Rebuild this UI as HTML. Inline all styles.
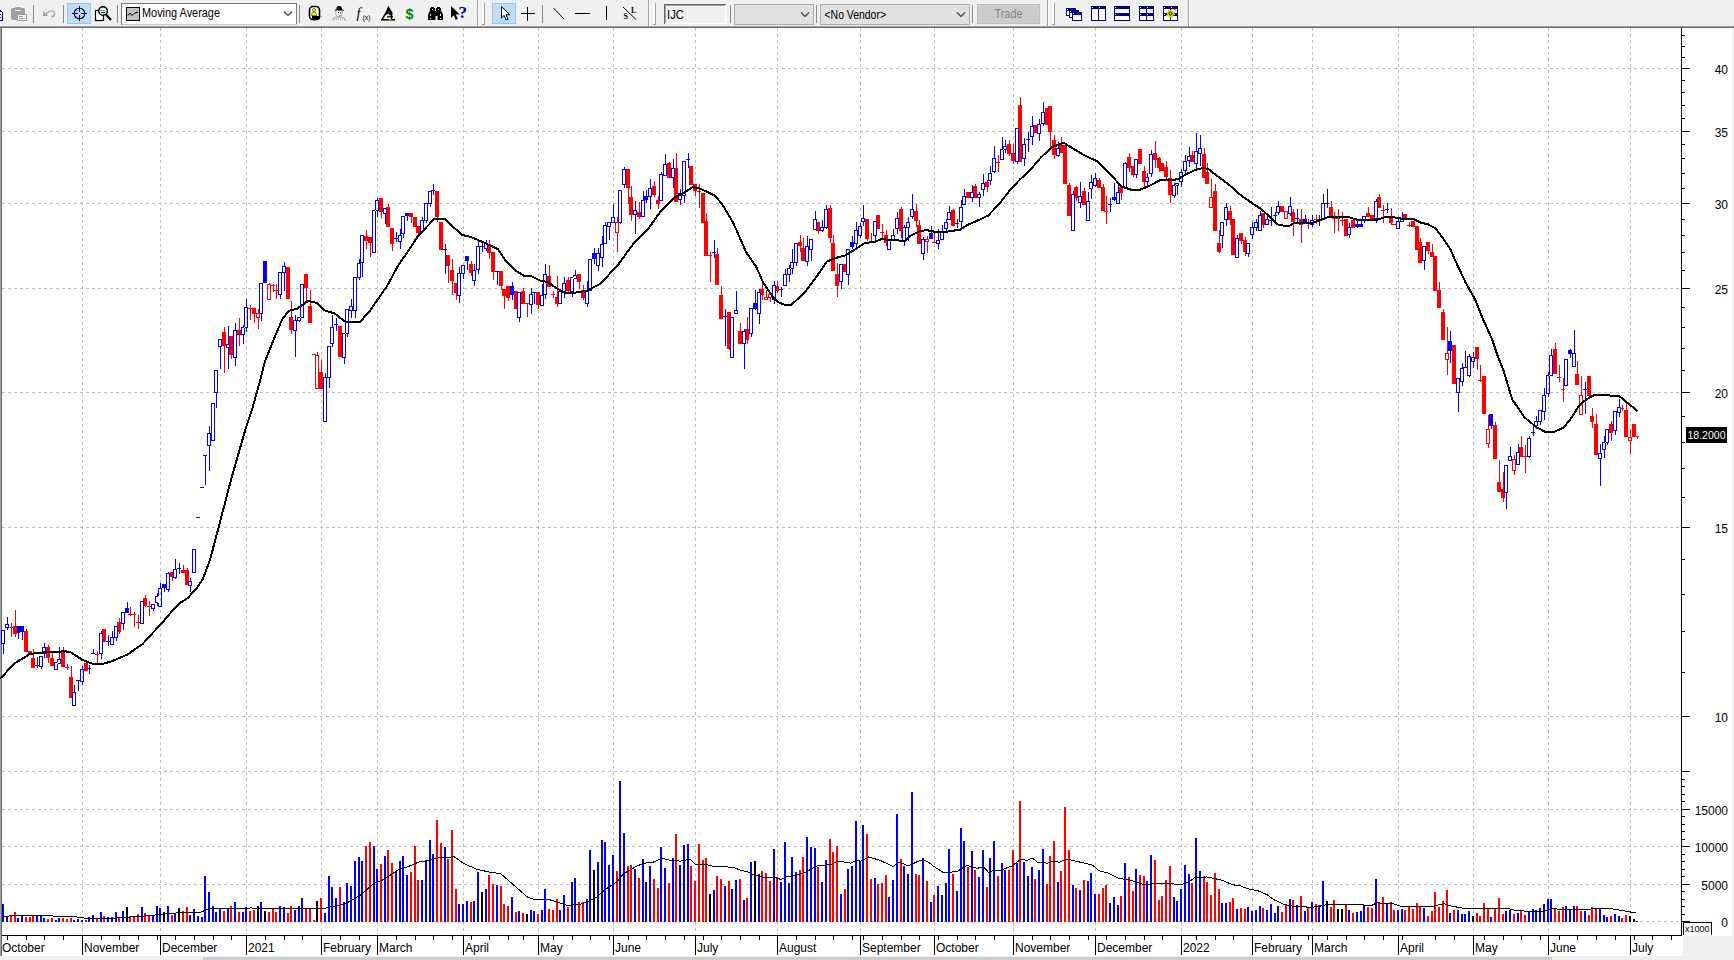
<!DOCTYPE html>
<html><head><meta charset="utf-8"><title>IJC</title>
<style>
html,body{margin:0;padding:0;background:#fff;}
body{width:1734px;height:960px;overflow:hidden;position:relative;font-family:"Liberation Sans",Arial,sans-serif;}
#chart{position:absolute;left:0;top:0;}
</style></head><body>
<svg id="tb" width="1734" height="28" viewBox="0 0 1734 28" style="position:absolute;left:0;top:0;z-index:2" font-family="'Liberation Sans', Arial, sans-serif">
<rect x="0" y="0" width="1734" height="26" fill="#f0f0f0"/>
<rect x="0" y="26" width="1734" height="1" fill="#a0a0a0"/>
<rect x="0" y="27" width="1734" height="1" fill="#696969"/>
<g shape-rendering="crispEdges">
<!-- separators -->
<g fill="#8a8a8a">
<rect x="33" y="5" width="1" height="18"/><rect x="63" y="5" width="1" height="18"/><rect x="117" y="5" width="1" height="18"/>
<rect x="299" y="5" width="1" height="18"/><rect x="542" y="5" width="1" height="18"/><rect x="730" y="5" width="1" height="18"/>
<rect x="816" y="5" width="1" height="18"/><rect x="972" y="5" width="1" height="18"/>
</g>
<!-- band dividers -->
<g>
<rect x="477" y="0" width="1" height="26" fill="#a0a0a0"/><rect x="478" y="0" width="1" height="26" fill="#fff"/>
<rect x="648" y="0" width="1" height="26" fill="#a0a0a0"/><rect x="649" y="0" width="1" height="26" fill="#fff"/>
<rect x="1047" y="0" width="1" height="26" fill="#a0a0a0"/><rect x="1048" y="0" width="1" height="26" fill="#fff"/>
<rect x="1188" y="0" width="1" height="26" fill="#a0a0a0"/><rect x="1189" y="0" width="1" height="26" fill="#fff"/>
</g>
<!-- grips -->
<g>
<rect x="482" y="3" width="2" height="21" fill="#fff"/><rect x="484" y="3" width="1" height="22" fill="#a0a0a0"/><rect x="482" y="24" width="3" height="1" fill="#a0a0a0"/>
<rect x="653" y="3" width="2" height="21" fill="#fff"/><rect x="655" y="3" width="1" height="22" fill="#a0a0a0"/><rect x="653" y="24" width="3" height="1" fill="#a0a0a0"/>
<rect x="1052" y="3" width="2" height="21" fill="#fff"/><rect x="1054" y="3" width="1" height="22" fill="#a0a0a0"/><rect x="1052" y="24" width="3" height="1" fill="#a0a0a0"/>
</g>
<!-- highlighted buttons -->
<rect x="67.5" y="3.5" width="23" height="20" fill="#c0dcf3" stroke="#90c8f6"/>
<rect x="492.5" y="3.5" width="23" height="20" fill="#c0dcf3" stroke="#90c8f6"/>
<!-- combos / fields -->
<rect x="121.5" y="3.5" width="175" height="21" fill="#fff" stroke="#7a7a7a"/>
<rect x="122" y="24" width="175" height="1" fill="#c8c8c8"/>
<rect x="664.5" y="4.5" width="61" height="19" fill="#f0f0f0" stroke="#fff"/>
<rect x="664" y="4" width="62" height="1" fill="#696969"/><rect x="664" y="4" width="1" height="20" fill="#696969"/>
<rect x="665" y="5" width="60" height="1" fill="#a0a0a0"/><rect x="665" y="5" width="1" height="18" fill="#a0a0a0"/>
<rect x="734.5" y="4.5" width="79" height="20" fill="#e1e1e1" stroke="#adadad"/>
<rect x="820.5" y="4.5" width="149" height="20" fill="#e1e1e1" stroke="#adadad"/>
<rect x="977.5" y="4.5" width="62" height="19" fill="#cccccc" stroke="#bfbfbf"/>
</g>
<!-- text -->
<g font-size="12" fill="#000">
<text x="142" y="17.3" textLength="78" lengthAdjust="spacingAndGlyphs">Moving Average</text>
<text x="667" y="18.5" textLength="17" lengthAdjust="spacingAndGlyphs">IJC</text>
<text x="824.5" y="18.5" textLength="61.5" lengthAdjust="spacingAndGlyphs">&lt;No Vendor&gt;</text>
<text x="994.5" y="18" fill="#838383" textLength="28" lengthAdjust="spacingAndGlyphs">Trade</text>
</g>
<!-- chevrons -->
<g fill="none" stroke="#404040" stroke-width="1.2">
<polyline points="284,11.5 288,15.5 292,11.5"/>
<polyline points="801,12.5 805,16.5 809,12.5"/>
<polyline points="957,12.5 961,16.5 965,12.5"/>
</g>
<!--ICONS-->
<!-- copy fragment -->
<g shape-rendering="crispEdges"><rect x="0" y="11" width="2" height="9" fill="#fff"/><path fill="#000080" d="M0 10h1v1h1v1h1v9h-3v-1h2v-8h-2z M0 14h1v1h-1z M0 17h1v1h-1z"/></g>
<!-- paste (disabled gray) -->
<g fill="#a0a0a0">
<rect x="11" y="8" width="14" height="12" rx="2"/><rect x="15" y="7" width="6" height="2" rx="1"/>
<rect x="15" y="10" width="6" height="1" fill="#f0f0f0"/>
<rect x="17.5" y="14.5" width="9" height="6" fill="#f0f0f0" stroke="#a0a0a0"/>
<rect x="19" y="16" width="4" height="1"/><rect x="19" y="18" width="6" height="1"/>
</g>
<!-- undo -->
<g fill="none" stroke="#a0a0a0" stroke-width="1.3"><path d="M45.5 14.5 L49 11.5 Q54.5 9.5 54.5 13.5 Q54.5 16.5 51.5 16.8"/></g>
<path fill="#a0a0a0" d="M43 11v5h5z"/>
<!-- crosshair -->
<circle cx="79.5" cy="13.5" r="5.3" fill="none" stroke="#000" stroke-width="1.1"/>
<g shape-rendering="crispEdges" fill="#0000a0"><rect x="72" y="13" width="6" height="1"/><rect x="81" y="13" width="6" height="1"/><rect x="79" y="6" width="1" height="6"/><rect x="79" y="15" width="1" height="6"/></g>
<!-- zoom magnifier -->
<g><rect x="95.5" y="10.5" width="8" height="10" fill="#fff" stroke="#000" stroke-width="1.2"/>
<circle cx="103" cy="11" r="4.3" fill="#f0f0f0" stroke="#000" stroke-width="1.4"/>
<rect x="100" y="10" width="5" height="1" fill="#00c8d0"/><rect x="101" y="12" width="4" height="1" fill="#000"/>
<line x1="106" y1="14.5" x2="111" y2="20" stroke="#000" stroke-width="2.2"/></g>
<!-- combo inner icon -->
<g shape-rendering="crispEdges"><rect x="126.500" y="7.500" width="13" height="13" fill="#c0c0c0" stroke="#000"/></g>
<polyline points="128,15.5 130,13 132,15.5 134,13.5 138,12" fill="none" stroke="#000" stroke-width="1"/>
<!-- lock/person -->
<g><rect x="309.500" y="6.500" width="10" height="13" rx="3.500" fill="#fff" stroke="#000" stroke-width="1.6"/>
<circle cx="314" cy="10" r="1.6" fill="#ffff00" stroke="#000" stroke-width="0.5"/>
<path d="M311.500 15.500 q0-3.500 2.500-3.500 q2.500 0 2.500 3.500z" fill="#ffff00" stroke="#000" stroke-width="0.5"/>
<path d="M312 16 h8 v3 q-3 2 -8 1z" fill="#000"/><path d="M320 15l2 1.500-2 1.500z" fill="#a0a0a0"/></g>
<!-- detective -->
<g><path d="M334 10.500 h10.500 l-1.500-1 h-1 q0-3.500-2.800-3.500 q-2.800 0-2.800 3.500 h-1z" fill="#000"/>
<circle cx="338.500" cy="8.300" r="0.800" fill="#2040ff"/>
<rect x="336" y="11" width="6" height="5" fill="#fff"/><path d="M336 11v4l2 2h2l2-2v-4" fill="none" stroke="#808080" stroke-width="0.700"/>
<rect x="338" y="12" width="1" height="1" fill="#000"/><rect x="340" y="12.500" width="1" height="1" fill="#000"/><path d="M339 14.500l1.500 1.500" stroke="#000" stroke-width="0.800"/>
<path d="M332.500 20.500 q0-3 3.500-3.500 h5.500 q4 0.500 4 3.500" fill="none" stroke="#a0a0a0" stroke-width="1"/>
<g stroke="#b0b0b0" stroke-width="0.800"><path d="M334.500 20.500v-2 M336.500 20.500v-2.500 M338.500 20.500v-2.500 M340.500 20.500v-2.500 M342.500 20.500v-2.500 M344.500 20.500v-2"/></g></g>
<!-- f(x) -->
<text x="356.500" y="17.500" font-family="'Liberation Serif', serif" font-style="italic" font-size="14.500" fill="#000">f</text>
<text x="362.500" y="19.500" font-size="8" fill="#000" textLength="8" lengthAdjust="spacingAndGlyphs">(x)</text>
<!-- microscope -->
<g fill="#000"><rect x="381" y="19" width="14" height="1.600"/><path d="M388.200 5.800 L392.600 12.800 L392.400 15.200 L389.200 15.200 L388.600 13.600 L386.600 14.800 L385.200 13.200z"/><path d="M386.800 13.200 L382.800 19.400 L381.200 19.400 L385.400 12.600z"/><rect x="387" y="16.200" width="6" height="1.200"/><rect x="390.800" y="15" width="1.400" height="4"/><rect x="388.500" y="19.200" width="3" height="1" fill="#ffe000"/></g>
<!-- dollar -->
<text x="405.500" y="19" font-size="14.500" font-weight="bold" fill="#008000">$</text>
<!-- binoculars -->
<g fill="#000"><path d="M428 20v-5.500l2-4v-2.500h1v-1h3v1h1v3h1v-3h1v-1h3v1h1v2.500l2 4v5.500h-5.500v-4h-2v4z"/>
<g fill="#f0f0f0"><rect x="432" y="9" width="1" height="1"/><rect x="438" y="9" width="1" height="1"/><rect x="430" y="14" width="1" height="2"/><rect x="440" y="14" width="1" height="2"/><rect x="430" y="18" width="1" height="1"/><rect x="440" y="18" width="1" height="1"/></g></g>
<!-- arrow ? -->
<path d="M451 6v12l2.800-2.800 2 4.600 2-0.900-2-4.400h4z" fill="#000"/>
<text x="458.500" y="18" font-family="'Liberation Serif', serif" font-weight="bold" font-size="16.500" fill="#000080" textLength="8.500" lengthAdjust="spacingAndGlyphs">?</text>
<!-- select arrow -->
<path d="M501.500 6.500v11.500l2.700-2.600 2 4.600 1.800-0.800-2-4.500h3.800z" fill="#fff" stroke="#000" stroke-width="1"/>
<!-- plus -->
<g shape-rendering="crispEdges" fill="#000"><rect x="521" y="13" width="14" height="1"/><rect x="527" y="7" width="1" height="14"/></g>
<!-- diag line, horiz line, vert line -->
<line x1="553.500" y1="8" x2="564" y2="19" stroke="#000" stroke-width="1"/>
<g shape-rendering="crispEdges" fill="#000"><rect x="575" y="13" width="15" height="1"/><rect x="606" y="6" width="1" height="14"/></g>
<!-- S/L -->
<line x1="623" y1="7" x2="636" y2="19.500" stroke="#000" stroke-width="1"/>
<text x="631" y="13" font-family="'Liberation Serif', serif" font-weight="bold" font-size="8" fill="#000">L</text>
<text x="623.500" y="19" font-family="'Liberation Serif', serif" font-weight="bold" font-size="8" fill="#000">S</text>
<!-- window icons -->
<g shape-rendering="crispEdges" fill="#000080">
<!-- cascade -->
<path d="M1066 8h10v8h-10z M1069 10h10v8h-10z M1072 12h10v9h-10z"/>
<g fill="#fff"><rect x="1067" y="11" width="2" height="4"/><rect x="1070" y="13" width="2" height="4"/><rect x="1073" y="15" width="8" height="5"/><rect x="1067" y="9" width="1" height="1"/><rect x="1070" y="11" width="1" height="1"/><rect x="1073" y="13" width="1" height="1"/></g>
<!-- tile vertical -->
<rect x="1091" y="6" width="15" height="15"/><g fill="#fff"><rect x="1092" y="9" width="6" height="11"/><rect x="1099" y="9" width="6" height="11"/><rect x="1092" y="7" width="1" height="1"/><rect x="1099" y="7" width="1" height="1"/></g>
<!-- tile horizontal -->
<rect x="1114" y="6" width="16" height="15"/><g fill="#fff"><rect x="1115" y="9" width="14" height="4"/><rect x="1115" y="16" width="14" height="4"/><rect x="1115" y="7" width="1" height="1"/><rect x="1115" y="14" width="1" height="1"/></g>
<!-- tile grid -->
<rect x="1139" y="6" width="15" height="15"/><g fill="#fff"><rect x="1140" y="9" width="6" height="4"/><rect x="1147" y="9" width="6" height="4"/><rect x="1140" y="16" width="6" height="4"/><rect x="1147" y="16" width="6" height="4"/><rect x="1140" y="7" width="1" height="1"/><rect x="1147" y="7" width="1" height="1"/><rect x="1140" y="14" width="1" height="1"/><rect x="1147" y="14" width="1" height="1"/></g>
<!-- gear tile -->
<rect x="1163" y="6" width="15" height="15"/><g fill="#fff"><rect x="1164" y="9" width="6" height="4"/><rect x="1171" y="9" width="6" height="4"/><rect x="1164" y="16" width="6" height="4"/><rect x="1171" y="16" width="6" height="4"/><rect x="1164" y="7" width="1" height="1"/><rect x="1171" y="7" width="1" height="1"/><rect x="1164" y="14" width="1" height="1"/></g>
</g>
<path d="M1173.500 10 l1.500-1 l1.500 1.500z" fill="#c00000"/>
<circle cx="1170.500" cy="13.500" r="3.400" fill="#e8d800"/>
<circle cx="1170.500" cy="13.500" r="4" fill="none" stroke="#e8d800" stroke-width="1.600" stroke-dasharray="1.600 1.540"/>
<circle cx="1170.500" cy="13.500" r="1.500" fill="#e8d800" stroke="#000" stroke-width="1"/>
</svg>

<svg id="chart" width="1734" height="960" viewBox="0 0 1734 960" shape-rendering="crispEdges">
<rect x="0" y="28" width="1734" height="932" fill="#fff"/>
<rect x="1683" y="936" width="51" height="24" fill="#f0f0f0"/>
<rect x="0" y="956" width="1734" height="4" fill="#f0f0f0"/>
<rect x="203" y="957" width="1349" height="3" fill="#cdcdcd"/>
<rect x="1732" y="28" width="2" height="932" fill="#f0f0f0"/>
<rect x="0" y="28" width="1" height="928" fill="#a0a0a0"/><rect x="1" y="28" width="1" height="928" fill="#696969"/>
<g stroke="#c0c0c0" stroke-width="1" stroke-dasharray="3 3" fill="none">
<line x1="2" y1="68.5" x2="1681" y2="68.5"/>
<line x1="2" y1="131.5" x2="1681" y2="131.5"/>
<line x1="2" y1="203.5" x2="1681" y2="203.5"/>
<line x1="2" y1="288.5" x2="1681" y2="288.5"/>
<line x1="2" y1="392.5" x2="1681" y2="392.5"/>
<line x1="2" y1="527.5" x2="1681" y2="527.5"/>
<line x1="2" y1="716.5" x2="1681" y2="716.5"/>
<line x1="2" y1="771.5" x2="1681" y2="771.5"/>
<line x1="2" y1="809.5" x2="1681" y2="809.5"/>
<line x1="2" y1="846.5" x2="1681" y2="846.5"/>
<line x1="2" y1="884.5" x2="1681" y2="884.5"/>
<line x1="2" y1="921.5" x2="1681" y2="921.5"/>
<line x1="82.5" y1="28" x2="82.5" y2="935" stroke-dashoffset="0"/>
<line x1="160.5" y1="28" x2="160.5" y2="935" stroke-dashoffset="0"/>
<line x1="246.5" y1="28" x2="246.5" y2="935" stroke-dashoffset="0"/>
<line x1="321.5" y1="28" x2="321.5" y2="935" stroke-dashoffset="0"/>
<line x1="377.5" y1="28" x2="377.5" y2="935" stroke-dashoffset="0"/>
<line x1="463.5" y1="28" x2="463.5" y2="935" stroke-dashoffset="0"/>
<line x1="538.5" y1="28" x2="538.5" y2="935" stroke-dashoffset="0"/>
<line x1="613.5" y1="28" x2="613.5" y2="935" stroke-dashoffset="0"/>
<line x1="695.5" y1="28" x2="695.5" y2="935" stroke-dashoffset="0"/>
<line x1="777.5" y1="28" x2="777.5" y2="935" stroke-dashoffset="0"/>
<line x1="860.5" y1="28" x2="860.5" y2="935" stroke-dashoffset="0"/>
<line x1="934.5" y1="28" x2="934.5" y2="935" stroke-dashoffset="0"/>
<line x1="1013.5" y1="28" x2="1013.5" y2="935" stroke-dashoffset="0"/>
<line x1="1095.5" y1="28" x2="1095.5" y2="935" stroke-dashoffset="0"/>
<line x1="1181.5" y1="28" x2="1181.5" y2="935" stroke-dashoffset="0"/>
<line x1="1252.5" y1="28" x2="1252.5" y2="935" stroke-dashoffset="0"/>
<line x1="1312.5" y1="28" x2="1312.5" y2="935" stroke-dashoffset="0"/>
<line x1="1398.5" y1="28" x2="1398.5" y2="935" stroke-dashoffset="0"/>
<line x1="1473.5" y1="28" x2="1473.5" y2="935" stroke-dashoffset="0"/>
<line x1="1548.5" y1="28" x2="1548.5" y2="935" stroke-dashoffset="0"/>
<line x1="1630.5" y1="28" x2="1630.5" y2="935" stroke-dashoffset="0"/>
</g>
<path fill="#00f" d="M2 904h2v18h-2z M6 917h2v5h-2z M17 918h2v4h-2z M21 915h2v7h-2z M36 916h2v6h-2z M40 916h2v6h-2z M43 918h2v4h-2z M55 920h2v2h-2z M58 918h2v4h-2z M73 920h2v2h-2z M77 919h2v3h-2z M81 920h2v2h-2z M88 917h2v5h-2z M92 915h2v7h-2z M100 912h2v10h-2z M107 917h2v5h-2z M111 917h2v5h-2z M115 912h2v10h-2z M122 911h2v11h-2z M141 907h2v15h-2z M152 915h2v7h-2z M156 906h2v16h-2z M159 908h2v14h-2z M167 906h2v16h-2z M174 913h2v9h-2z M189 915h2v7h-2z M193 909h2v13h-2z M197 916h2v6h-2z M201 917h2v5h-2z M204 876h2v46h-2z M208 892h2v30h-2z M212 906h2v16h-2z M215 912h2v10h-2z M219 909h2v13h-2z M227 909h2v13h-2z M234 902h2v20h-2z M242 912h2v10h-2z M245 907h2v15h-2z M260 902h2v20h-2z M279 906h2v16h-2z M283 907h2v15h-2z M294 910h2v12h-2z M298 906h2v16h-2z M301 898h2v24h-2z M324 913h2v9h-2z M328 876h2v46h-2z M331 887h2v35h-2z M335 898h2v24h-2z M343 902h2v20h-2z M346 883h2v39h-2z M350 886h2v36h-2z M354 861h2v61h-2z M358 857h2v65h-2z M361 861h2v61h-2z M373 846h2v76h-2z M376 869h2v53h-2z M384 856h2v66h-2z M395 872h2v50h-2z M399 861h2v61h-2z M402 856h2v66h-2z M406 875h2v47h-2z M421 880h2v42h-2z M425 860h2v62h-2z M429 840h2v82h-2z M432 854h2v68h-2z M444 847h2v75h-2z M458 904h2v18h-2z M462 904h2v18h-2z M466 901h2v21h-2z M473 901h2v21h-2z M477 872h2v50h-2z M485 889h2v33h-2z M496 885h2v37h-2z M511 897h2v25h-2z M518 911h2v11h-2z M530 910h2v12h-2z M533 911h2v11h-2z M541 910h2v12h-2z M544 889h2v33h-2z M559 910h2v12h-2z M563 895h2v27h-2z M571 882h2v40h-2z M574 878h2v44h-2z M586 899h2v23h-2z M589 850h2v72h-2z M597 862h2v60h-2z M601 840h2v82h-2z M604 842h2v80h-2z M608 865h2v57h-2z M612 855h2v67h-2z M619 781h2v141h-2z M623 833h2v89h-2z M634 869h2v53h-2z M642 859h2v63h-2z M645 882h2v40h-2z M649 866h2v56h-2z M660 847h2v75h-2z M664 868h2v54h-2z M672 858h2v64h-2z M679 865h2v57h-2z M683 845h2v77h-2z M687 844h2v78h-2z M713 890h2v32h-2z M724 886h2v36h-2z M731 889h2v33h-2z M735 880h2v42h-2z M743 900h2v22h-2z M750 862h2v60h-2z M758 874h2v48h-2z M773 849h2v73h-2z M780 882h2v40h-2z M784 842h2v80h-2z M788 883h2v39h-2z M791 857h2v65h-2z M795 872h2v50h-2z M806 837h2v85h-2z M810 847h2v75h-2z M814 848h2v74h-2z M821 882h2v40h-2z M825 860h2v62h-2z M840 894h2v28h-2z M847 869h2v53h-2z M851 866h2v56h-2z M855 821h2v101h-2z M859 861h2v61h-2z M862 825h2v97h-2z M874 878h2v44h-2z M888 897h2v25h-2z M892 880h2v42h-2z M896 814h2v108h-2z M903 866h2v56h-2z M907 874h2v48h-2z M911 792h2v130h-2z M922 858h2v64h-2z M930 902h2v20h-2z M937 886h2v36h-2z M941 895h2v27h-2z M945 883h2v39h-2z M948 849h2v73h-2z M956 891h2v31h-2z M960 828h2v94h-2z M963 841h2v81h-2z M971 851h2v71h-2z M978 877h2v45h-2z M982 850h2v72h-2z M989 858h2v64h-2z M993 841h2v81h-2z M1001 863h2v59h-2z M1004 870h2v52h-2z M1016 863h2v59h-2z M1023 862h2v60h-2z M1027 876h2v46h-2z M1031 867h2v55h-2z M1038 870h2v52h-2z M1042 849h2v73h-2z M1057 882h2v40h-2z M1072 885h2v37h-2z M1079 890h2v32h-2z M1087 881h2v41h-2z M1090 873h2v49h-2z M1094 894h2v28h-2z M1109 903h2v19h-2z M1113 897h2v25h-2z M1117 905h2v17h-2z M1124 863h2v59h-2z M1135 869h2v53h-2z M1146 881h2v41h-2z M1150 855h2v67h-2z M1173 897h2v25h-2z M1176 901h2v21h-2z M1180 889h2v33h-2z M1184 865h2v57h-2z M1188 874h2v48h-2z M1195 838h2v84h-2z M1199 871h2v51h-2z M1221 903h2v19h-2z M1225 903h2v19h-2z M1236 909h2v13h-2z M1247 907h2v15h-2z M1251 911h2v11h-2z M1255 910h2v12h-2z M1259 906h2v16h-2z M1266 910h2v12h-2z M1270 904h2v18h-2z M1274 913h2v9h-2z M1277 906h2v16h-2z M1289 899h2v23h-2z M1296 905h2v17h-2z M1304 911h2v11h-2z M1311 902h2v20h-2z M1318 905h2v17h-2z M1322 881h2v41h-2z M1348 910h2v12h-2z M1356 912h2v10h-2z M1360 911h2v11h-2z M1363 905h2v17h-2z M1375 879h2v43h-2z M1386 904h2v18h-2z M1397 910h2v12h-2z M1401 909h2v13h-2z M1423 908h2v14h-2z M1449 913h2v9h-2z M1457 910h2v12h-2z M1461 914h2v8h-2z M1464 914h2v8h-2z M1468 911h2v11h-2z M1490 917h2v5h-2z M1505 911h2v11h-2z M1509 910h2v12h-2z M1517 913h2v9h-2z M1528 911h2v11h-2z M1532 909h2v13h-2z M1535 910h2v12h-2z M1539 908h2v14h-2z M1543 904h2v18h-2z M1547 899h2v23h-2z M1550 899h2v23h-2z M1565 906h2v16h-2z M1569 910h2v12h-2z M1573 906h2v16h-2z M1584 911h2v11h-2z M1599 909h2v13h-2z M1603 915h2v7h-2z M1606 917h2v5h-2z M1614 914h2v8h-2z M1618 916h2v6h-2z M1636 921h2v1h-2z"/>
<path fill="#f00" d="M10 916h2v6h-2z M14 912h2v10h-2z M25 917h2v5h-2z M29 917h2v5h-2z M32 915h2v7h-2z M47 919h2v3h-2z M51 918h2v4h-2z M62 918h2v4h-2z M66 919h2v3h-2z M70 918h2v4h-2z M85 920h2v2h-2z M96 919h2v3h-2z M103 916h2v6h-2z M118 917h2v5h-2z M129 916h2v6h-2z M133 917h2v5h-2z M137 914h2v8h-2z M144 913h2v9h-2z M148 916h2v6h-2z M171 915h2v7h-2z M182 911h2v11h-2z M186 907h2v15h-2z M223 911h2v11h-2z M230 906h2v16h-2z M238 912h2v10h-2z M249 911h2v11h-2z M253 910h2v12h-2z M268 912h2v10h-2z M272 908h2v14h-2z M275 912h2v10h-2z M287 913h2v9h-2z M290 906h2v16h-2z M305 909h2v13h-2z M309 909h2v13h-2z M313 920h2v2h-2z M320 898h2v24h-2z M339 887h2v35h-2z M365 846h2v76h-2z M369 842h2v80h-2z M380 864h2v58h-2z M387 850h2v72h-2z M391 863h2v59h-2z M410 872h2v50h-2z M414 846h2v76h-2z M417 880h2v42h-2z M436 820h2v102h-2z M440 843h2v79h-2z M447 859h2v63h-2z M451 830h2v92h-2z M455 889h2v33h-2z M470 902h2v20h-2z M488 875h2v47h-2z M492 884h2v38h-2z M500 886h2v36h-2z M503 904h2v18h-2z M507 906h2v16h-2z M515 912h2v10h-2z M522 913h2v9h-2z M537 914h2v8h-2z M548 909h2v13h-2z M552 910h2v12h-2z M556 899h2v23h-2z M567 907h2v15h-2z M578 902h2v20h-2z M582 902h2v20h-2z M616 871h2v51h-2z M627 866h2v56h-2z M630 865h2v57h-2z M638 878h2v44h-2z M653 879h2v43h-2z M657 888h2v34h-2z M668 883h2v39h-2z M675 834h2v88h-2z M690 866h2v56h-2z M694 881h2v41h-2z M698 844h2v78h-2z M702 860h2v62h-2z M705 858h2v64h-2z M716 876h2v46h-2z M720 879h2v43h-2z M728 881h2v41h-2z M739 879h2v43h-2z M746 898h2v24h-2z M761 871h2v51h-2z M765 873h2v49h-2z M769 881h2v41h-2z M776 877h2v45h-2z M799 870h2v52h-2z M802 857h2v65h-2z M817 867h2v55h-2z M829 839h2v83h-2z M832 852h2v70h-2z M836 846h2v76h-2z M844 889h2v33h-2z M866 834h2v88h-2z M870 879h2v43h-2z M877 884h2v38h-2z M881 883h2v39h-2z M885 875h2v47h-2z M900 859h2v63h-2z M915 874h2v48h-2z M918 875h2v47h-2z M926 881h2v41h-2z M933 895h2v27h-2z M952 874h2v48h-2z M967 867h2v55h-2z M974 870h2v52h-2z M986 887h2v35h-2z M997 876h2v46h-2z M1008 870h2v52h-2z M1012 850h2v72h-2z M1019 801h2v121h-2z M1034 879h2v43h-2z M1046 884h2v38h-2z M1049 856h2v66h-2z M1053 841h2v81h-2z M1060 871h2v51h-2z M1064 807h2v115h-2z M1068 850h2v72h-2z M1075 888h2v34h-2z M1083 880h2v42h-2z M1098 894h2v28h-2z M1102 888h2v34h-2z M1105 885h2v37h-2z M1120 896h2v26h-2z M1128 877h2v45h-2z M1132 891h2v31h-2z M1139 875h2v47h-2z M1143 876h2v46h-2z M1154 860h2v62h-2z M1158 900h2v22h-2z M1161 896h2v26h-2z M1165 880h2v42h-2z M1169 866h2v56h-2z M1191 883h2v39h-2z M1203 876h2v46h-2z M1206 882h2v40h-2z M1210 895h2v27h-2z M1214 873h2v49h-2z M1218 889h2v33h-2z M1229 902h2v20h-2z M1232 898h2v24h-2z M1240 908h2v14h-2z M1244 909h2v13h-2z M1262 908h2v14h-2z M1281 912h2v10h-2z M1285 905h2v17h-2z M1292 900h2v22h-2z M1300 896h2v26h-2z M1307 908h2v14h-2z M1315 904h2v18h-2z M1330 907h2v15h-2z M1333 900h2v22h-2z M1345 905h2v17h-2z M1352 913h2v9h-2z M1367 907h2v15h-2z M1371 908h2v14h-2z M1378 902h2v20h-2z M1382 897h2v25h-2z M1390 902h2v20h-2z M1393 910h2v12h-2z M1404 910h2v12h-2z M1408 907h2v15h-2z M1412 909h2v13h-2z M1416 903h2v19h-2z M1419 907h2v15h-2z M1427 916h2v6h-2z M1431 911h2v11h-2z M1434 892h2v30h-2z M1438 907h2v15h-2z M1442 901h2v21h-2z M1446 890h2v32h-2z M1453 910h2v12h-2z M1476 913h2v9h-2z M1479 916h2v6h-2z M1483 903h2v19h-2z M1487 909h2v13h-2z M1494 908h2v14h-2z M1498 898h2v24h-2z M1502 914h2v8h-2z M1513 914h2v8h-2z M1520 911h2v11h-2z M1524 915h2v7h-2z M1554 908h2v14h-2z M1558 911h2v11h-2z M1562 907h2v15h-2z M1576 906h2v16h-2z M1580 911h2v11h-2z M1588 915h2v7h-2z M1591 907h2v15h-2z M1595 909h2v13h-2z M1610 916h2v6h-2z M1621 918h2v4h-2z M1625 915h2v7h-2z"/>
<path fill="#000" d="M126 907h2v15h-2z M163 912h2v10h-2z M178 908h2v14h-2z M257 906h2v16h-2z M264 911h2v11h-2z M316 901h2v21h-2z M481 892h2v30h-2z M526 914h2v8h-2z M593 870h2v52h-2z M709 894h2v28h-2z M754 861h2v61h-2z M1326 901h2v21h-2z M1337 909h2v13h-2z M1341 909h2v13h-2z M1472 916h2v6h-2z M1629 916h2v6h-2z M1633 919h2v3h-2z"/>
<polyline fill="none" stroke="#000" stroke-width="1" points="3.3,916.3 20.1,915.5 71.9,916.3 83.6,918.0 117.1,918.0 150.5,915.5 167.3,913.5 184.0,912.5 200.7,912.1 209.1,908.8 217.4,908.8 250.9,908.0 287.7,908.8 290.0,908.8 323.5,908.5 345.2,903.8 360.2,895.4 373.6,883.7 383.7,879.5 398.7,869.5 407.1,867.0 418.8,862.0 428.8,860.6 440.5,857.3 448.9,857.3 453.9,856.5 463.9,863.6 477.3,869.5 490.7,872.3 500.7,873.7 514.1,885.4 527.5,897.1 534.2,899.3 549.2,899.6 557.6,902.1 567.6,905.5 577.7,904.3 580.0,904.3 588.4,901.3 596.7,897.1 605.1,889.6 616.8,882.0 623.5,873.7 635.2,867.0 643.6,863.1 651.9,862.8 662.0,858.1 670.3,860.3 680.4,861.1 690.4,859.1 695.4,864.5 707.1,864.8 713.8,866.5 723.8,866.7 733.9,867.5 740.6,870.3 747.3,871.7 753.9,874.8 764.0,877.4 775.7,877.4 780.7,879.5 787.4,876.5 797.4,875.0 805.8,872.0 817.5,865.8 830.9,864.5 837.6,861.1 850.9,863.1 856.0,860.3 861.0,861.1 868.5,857.0 880.0,860.3 893.4,866.7 898.4,862.0 908.5,865.8 920.2,860.3 926.9,861.1 933.6,866.2 943.6,872.8 957.0,871.5 967.0,865.3 977.0,868.3 983.7,867.0 988.7,872.5 993.8,870.3 1000.5,870.3 1012.2,865.8 1020.5,859.5 1027.2,860.3 1032.2,858.1 1037.3,862.0 1047.3,863.1 1054.0,861.1 1059.0,862.3 1067.4,859.1 1077.4,861.5 1092.4,865.0 1099.1,870.8 1107.5,872.8 1119.2,878.4 1130.9,880.4 1144.3,884.6 1158.5,883.4 1171.7,883.7 1180.1,884.9 1188.4,882.0 1195.1,877.5 1206.8,877.0 1215.2,878.7 1223.6,880.7 1231.9,884.6 1240.3,885.9 1250.3,889.6 1257.0,890.4 1267.0,894.6 1273.7,899.6 1283.8,904.3 1293.8,906.3 1303.8,906.6 1310.5,907.6 1320.6,906.0 1327.3,904.6 1372.4,905.1 1377.4,902.4 1384.1,903.8 1390.8,902.9 1400.8,906.3 1410.9,906.6 1432.6,906.6 1437.6,905.1 1444.0,903.8 1452.4,906.3 1464.1,908.3 1507.6,908.3 1514.2,910.1 1527.6,911.3 1544.4,911.3 1551.0,908.8 1574.5,909.6 1589.5,909.6 1592.9,908.0 1611.3,908.8 1624.6,911.0 1636.3,913.0"/>
<path fill="#00f" d="M3 644h1v10h-1z M7 617h1v7h-1z M7 628h1v2h-1z M18 626h1v13h-1z M16 626h4v7h-4z M22 626h1v14h-1z M20 626h4v6h-4z M37 657h1v11h-1z M35 665h4v1h-4z M41 667h1v2h-1z M44 643h1v4h-1z M44 654h1v4h-1z M59 647h1v12h-1z M74 685h1v7h-1z M78 680h1v11h-1z M76 680h4v1h-4z M82 666h1v3h-1z M82 682h1v3h-1z M89 665h1v9h-1z M87 668h4v1h-4z M93 649h1v5h-1z M91 653h4v1h-4z M101 631h1v2h-1z M101 654h1v5h-1z M108 635h1v11h-1z M106 641h4v1h-4z M112 631h1v6h-1z M116 638h1v3h-1z M123 624h1v6h-1z M127 602h1v11h-1z M125 608h4v5h-4z M153 609h1v2h-1z M157 593h1v3h-1z M157 603h1v3h-1z M160 583h1v5h-1z M164 584h1v8h-1z M162 584h4v4h-4z M168 572h1v1h-1z M168 590h1v2h-1z M175 559h1v10h-1z M175 578h1v1h-1z M179 563h1v11h-1z M177 568h4v1h-4z M190 578h1v3h-1z M190 586h1v6h-1z M196 517h4v1h-4z M200 487h4v1h-4z M205 455h1v30h-1z M203 455h4v1h-4z M209 426h1v7h-1z M209 446h1v25h-1z M216 393h1v15h-1z M220 347h1v22h-1z M228 326h1v18h-1z M228 348h1v21h-1z M235 323h1v7h-1z M235 358h1v8h-1z M243 325h1v2h-1z M243 335h1v9h-1z M246 299h1v8h-1z M246 328h1v4h-1z M261 314h1v7h-1z M265 261h1v22h-1z M263 261h4v22h-4z M280 295h1v4h-1z M284 262h1v4h-1z M284 273h1v18h-1z M295 315h1v5h-1z M295 331h1v26h-1z M299 321h1v1h-1z M325 373h1v4h-1z M329 378h1v10h-1z M332 315h1v12h-1z M332 344h1v3h-1z M336 318h1v13h-1z M334 324h4v1h-4z M344 358h1v6h-1z M347 334h1v3h-1z M351 299h1v7h-1z M351 311h1v7h-1z M355 311h1v7h-1z M359 259h1v4h-1z M359 278h1v2h-1z M362 263h1v14h-1z M377 198h1v2h-1z M377 211h1v6h-1z M385 214h1v10h-1z M396 232h1v10h-1z M394 238h4v1h-4z M400 229h1v6h-1z M400 242h1v7h-1z M403 234h1v4h-1z M407 213h1v8h-1z M405 213h4v3h-4z M422 217h1v3h-1z M426 221h1v2h-1z M430 204h1v3h-1z M433 184h1v11h-1z M431 190h4v1h-4z M445 244h1v30h-1z M443 249h4v1h-4z M459 267h1v6h-1z M459 296h1v7h-1z M463 274h1v5h-1z M467 256h1v14h-1z M465 256h4v5h-4z M474 264h1v6h-1z M474 281h1v5h-1z M478 240h1v6h-1z M478 270h1v4h-1z M482 243h1v9h-1z M480 246h4v1h-4z M486 240h1v3h-1z M486 249h1v2h-1z M497 271h1v14h-1z M495 271h4v1h-4z M512 282h1v18h-1z M510 286h4v9h-4z M519 318h1v4h-1z M531 288h1v6h-1z M531 305h1v9h-1z M534 292h1v12h-1z M532 292h4v1h-4z M542 284h1v11h-1z M545 264h1v10h-1z M545 295h1v4h-1z M564 277h1v6h-1z M564 292h1v6h-1z M572 292h1v5h-1z M575 270h1v5h-1z M587 281h1v10h-1z M587 304h1v3h-1z M594 248h1v16h-1z M592 253h4v6h-4z M598 248h1v5h-1z M598 266h1v5h-1z M602 236h1v8h-1z M602 258h1v9h-1z M605 222h1v3h-1z M609 227h1v13h-1z M613 204h1v13h-1z M620 223h1v1h-1z M624 167h1v2h-1z M624 185h1v3h-1z M635 201h1v9h-1z M635 215h1v19h-1z M643 191h1v9h-1z M646 190h1v13h-1z M644 196h4v4h-4z M650 179h1v9h-1z M650 197h1v12h-1z M661 172h1v2h-1z M665 154h1v10h-1z M673 159h1v9h-1z M673 178h1v10h-1z M680 189h1v4h-1z M680 200h1v5h-1z M684 196h1v7h-1z M688 153h1v15h-1z M686 159h4v1h-4z M714 240h1v18h-1z M712 252h4v1h-4z M725 309h1v37h-1z M723 316h4v1h-4z M736 291h1v19h-1z M744 329h1v2h-1z M744 344h1v25h-1z M751 334h1v3h-1z M755 290h1v20h-1z M753 303h4v6h-4z M759 289h1v3h-1z M759 314h1v10h-1z M774 281h1v4h-1z M774 300h1v4h-1z M781 287h1v10h-1z M779 289h4v1h-4z M785 269h1v5h-1z M789 265h1v3h-1z M789 275h1v7h-1z M792 249h1v13h-1z M792 269h1v5h-1z M796 263h1v3h-1z M807 236h1v10h-1z M807 262h1v4h-1z M811 250h1v11h-1z M815 211h1v8h-1z M822 220h1v7h-1z M822 231h1v1h-1z M826 205h1v4h-1z M826 228h1v1h-1z M841 282h1v7h-1z M848 275h1v10h-1z M852 236h1v13h-1z M850 242h4v5h-4z M856 222h1v8h-1z M856 244h1v4h-1z M860 223h1v3h-1z M860 236h1v2h-1z M863 205h1v13h-1z M863 222h1v4h-1z M875 236h1v4h-1z M893 229h1v6h-1z M897 212h1v6h-1z M897 229h1v5h-1z M904 225h1v2h-1z M904 241h1v5h-1z M908 217h1v5h-1z M908 228h1v13h-1z M912 194h1v15h-1z M912 217h1v2h-1z M923 237h1v2h-1z M923 254h1v6h-1z M931 226h1v13h-1z M929 233h4v6h-4z M938 229h1v11h-1z M938 244h1v5h-1z M942 225h1v6h-1z M946 219h1v3h-1z M946 229h1v3h-1z M949 206h1v6h-1z M957 219h1v9h-1z M955 223h4v1h-4z M961 200h1v7h-1z M961 222h1v7h-1z M964 189h1v7h-1z M972 185h1v7h-1z M972 198h1v4h-1z M979 192h1v2h-1z M979 198h1v9h-1z M983 174h1v9h-1z M983 190h1v6h-1z M990 166h1v7h-1z M990 181h1v4h-1z M994 146h1v12h-1z M994 172h1v1h-1z M1002 137h1v12h-1z M1005 140h1v6h-1z M1005 150h1v3h-1z M1017 162h1v2h-1z M1024 138h1v6h-1z M1024 159h1v7h-1z M1028 132h1v20h-1z M1026 139h4v1h-4z M1032 116h1v10h-1z M1032 137h1v8h-1z M1039 119h1v5h-1z M1039 134h1v7h-1z M1043 102h1v10h-1z M1043 124h1v2h-1z M1058 142h1v6h-1z M1058 156h1v1h-1z M1073 191h1v3h-1z M1080 182h1v14h-1z M1080 203h1v5h-1z M1088 192h1v9h-1z M1091 175h1v7h-1z M1091 189h1v10h-1z M1095 173h1v5h-1z M1095 186h1v1h-1z M1110 198h1v14h-1z M1108 204h4v1h-4z M1114 183h1v18h-1z M1112 197h4v3h-4z M1118 184h1v8h-1z M1125 162h1v1h-1z M1136 175h1v3h-1z M1147 173h1v4h-1z M1147 182h1v4h-1z M1151 150h1v4h-1z M1151 174h1v3h-1z M1174 183h1v2h-1z M1174 196h1v2h-1z M1177 186h1v9h-1z M1181 169h1v3h-1z M1181 182h1v5h-1z M1185 155h1v6h-1z M1185 171h1v2h-1z M1189 147h1v9h-1z M1189 161h1v6h-1z M1196 133h1v18h-1z M1196 164h1v5h-1z M1200 135h1v13h-1z M1200 154h1v12h-1z M1222 236h1v12h-1z M1226 203h1v4h-1z M1226 220h1v6h-1z M1237 235h1v3h-1z M1248 254h1v3h-1z M1252 222h1v5h-1z M1252 235h1v4h-1z M1256 219h1v3h-1z M1256 228h1v3h-1z M1260 211h1v4h-1z M1267 213h1v6h-1z M1271 207h1v19h-1z M1269 220h4v1h-4z M1275 212h1v10h-1z M1273 215h4v1h-4z M1278 201h1v5h-1z M1278 213h1v2h-1z M1290 197h1v9h-1z M1290 214h1v2h-1z M1297 209h1v15h-1z M1295 218h4v1h-4z M1305 215h1v9h-1z M1303 219h4v4h-4z M1312 215h1v5h-1z M1312 225h1v2h-1z M1319 215h1v11h-1z M1317 219h4v1h-4z M1323 194h1v9h-1z M1327 189h1v19h-1z M1325 203h4v1h-4z M1349 223h1v4h-1z M1349 235h1v3h-1z M1357 221h1v7h-1z M1355 224h4v3h-4z M1361 220h1v7h-1z M1359 224h4v3h-4z M1364 220h1v3h-1z M1376 199h1v2h-1z M1376 219h1v4h-1z M1387 203h1v10h-1z M1385 209h4v1h-4z M1398 217h1v4h-1z M1402 212h1v7h-1z M1424 261h1v9h-1z M1450 331h1v32h-1z M1448 341h4v10h-4z M1458 393h1v19h-1z M1462 363h1v5h-1z M1462 382h1v4h-1z M1465 351h1v17h-1z M1463 367h4v1h-4z M1469 354h1v2h-1z M1469 376h1v1h-1z M1473 352h1v5h-1z M1473 362h1v6h-1z M1491 414h1v15h-1z M1489 414h4v12h-4z M1506 493h1v16h-1z M1510 447h1v9h-1z M1518 444h1v8h-1z M1529 436h1v2h-1z M1529 457h1v1h-1z M1533 425h1v11h-1z M1531 432h4v1h-4z M1536 416h1v5h-1z M1536 426h1v3h-1z M1540 422h1v3h-1z M1544 388h1v7h-1z M1544 412h1v8h-1z M1548 372h1v3h-1z M1548 394h1v3h-1z M1551 349h1v6h-1z M1570 349h1v9h-1z M1568 350h4v4h-4z M1574 330h1v23h-1z M1585 382h1v32h-1z M1583 389h4v1h-4z M1600 444h1v9h-1z M1600 459h1v27h-1z M1604 436h1v6h-1z M1604 450h1v8h-1z M1607 443h1v2h-1z M1615 431h1v4h-1z M1619 399h1v8h-1z M1619 413h1v4h-1z"/>
<path fill="#f00" d="M11 623h1v14h-1z M9 627h4v1h-4z M15 610h1v27h-1z M13 626h4v8h-4z M26 629h1v23h-1z M24 631h4v21h-4z M30 651h1v4h-1z M28 651h4v4h-4z M33 649h1v19h-1z M31 658h4v10h-4z M48 645h1v18h-1z M46 647h4v11h-4z M52 653h1v13h-1z M50 658h4v8h-4z M63 647h1v20h-1z M61 651h4v16h-4z M67 664h1v6h-1z M65 667h4v1h-4z M71 666h1v32h-1z M69 677h4v21h-4z M86 663h1v8h-1z M84 663h4v8h-4z M97 651h1v12h-1z M95 654h4v1h-4z M104 629h1v13h-1z M102 629h4v13h-4z M119 618h1v16h-1z M117 622h4v10h-4z M130 607h1v9h-1z M128 614h4v1h-4z M134 612h1v15h-1z M132 614h4v1h-4z M138 615h1v14h-1z M136 622h4v1h-4z M145 595h1v12h-1z M143 598h4v8h-4z M149 601h1v15h-1z M147 606h4v1h-4z M172 572h1v9h-1z M170 572h4v5h-4z M183 565h1v8h-1z M181 570h4v3h-4z M187 568h1v17h-1z M185 570h4v15h-4z M224 327h1v46h-1z M222 332h4v14h-4z M231 336h1v23h-1z M229 336h4v19h-4z M239 318h1v28h-1z M237 330h4v5h-4z M250 305h1v15h-1z M248 308h4v1h-4z M254 308h1v15h-1z M252 308h4v6h-4z M258 309h1v4h-1z M258 318h1v11h-1z M269 283h1v1h-1z M273 284h1v8h-1z M271 285h4v1h-4z M276 284h1v15h-1z M274 290h4v1h-4z M288 267h1v32h-1z M286 267h4v32h-4z M291 301h1v33h-1z M289 317h4v13h-4z M306 274h1v28h-1z M304 274h4v14h-4z M310 290h1v33h-1z M308 306h4v17h-4z M312 354h4v1h-4z M317 352h1v3h-1z M321 360h1v29h-1z M319 372h4v17h-4z M340 326h1v31h-1z M338 326h4v31h-4z M366 230h1v19h-1z M364 236h4v5h-4z M370 237h1v20h-1z M368 237h4v6h-4z M381 198h1v20h-1z M379 198h4v14h-4z M388 204h1v23h-1z M386 207h4v20h-4z M392 228h1v23h-1z M390 228h4v16h-4z M411 213h1v10h-1z M409 213h4v4h-4z M415 217h1v10h-1z M413 217h4v10h-4z M418 226h1v9h-1z M416 226h4v7h-4z M437 191h1v31h-1z M435 191h4v26h-4z M441 222h1v28h-1z M439 222h4v28h-4z M448 255h1v28h-1z M446 255h4v11h-4z M452 259h1v36h-1z M450 270h4v11h-4z M456 283h1v17h-1z M454 283h4v10h-4z M471 261h1v15h-1z M469 264h4v9h-4z M489 240h1v19h-1z M487 244h4v9h-4z M493 252h1v28h-1z M491 252h4v20h-4z M501 271h1v19h-1z M499 271h4v15h-4z M504 289h1v20h-1z M502 289h4v7h-4z M508 286h1v15h-1z M506 286h4v12h-4z M516 291h1v18h-1z M514 291h4v18h-4z M523 288h1v16h-1z M521 291h4v13h-4z M527 303h1v14h-1z M525 303h4v1h-4z M538 292h1v17h-1z M536 292h4v13h-4z M549 265h1v22h-1z M547 276h4v11h-4z M553 291h1v7h-1z M551 294h4v1h-4z M557 276h1v31h-1z M555 297h4v7h-4z M568 277h1v15h-1z M566 280h4v11h-4z M579 274h1v15h-1z M577 274h4v8h-4z M583 285h1v15h-1z M581 290h4v8h-4z M617 217h1v5h-1z M617 233h1v19h-1z M628 169h1v35h-1z M626 169h4v19h-4z M631 186h1v35h-1z M629 197h4v18h-4z M639 202h1v17h-1z M637 212h4v5h-4z M654 181h1v16h-1z M652 186h4v9h-4z M658 196h1v13h-1z M656 200h4v4h-4z M669 162h1v16h-1z M667 163h4v15h-4z M676 153h1v49h-1z M674 168h4v34h-4z M691 166h1v19h-1z M689 166h4v19h-4z M695 184h1v12h-1z M693 184h4v7h-4z M699 184h1v24h-1z M697 191h4v1h-4z M703 193h1v30h-1z M701 193h4v30h-4z M706 213h1v43h-1z M704 221h4v35h-4z M710 252h1v30h-1z M708 255h4v1h-4z M717 248h1v37h-1z M715 254h4v31h-4z M721 286h1v33h-1z M719 295h4v24h-4z M729 312h1v38h-1z M727 312h4v37h-4z M740 323h1v21h-1z M738 331h4v13h-4z M747 317h1v27h-1z M745 329h4v11h-4z M762 282h1v18h-1z M760 289h4v6h-4z M766 290h1v7h-1z M770 298h1v4h-1z M777 281h1v12h-1z M775 286h4v5h-4z M800 235h1v17h-1z M798 242h4v4h-4z M803 238h1v23h-1z M801 248h4v13h-4z M818 222h1v12h-1z M816 222h4v9h-4z M830 205h1v38h-1z M828 208h4v30h-4z M833 235h1v36h-1z M831 243h4v28h-4z M837 263h1v34h-1z M835 274h4v12h-4z M845 264h1v8h-1z M843 264h4v8h-4z M867 219h1v22h-1z M865 219h4v20h-4z M871 233h1v9h-1z M869 241h4v1h-4z M878 215h1v14h-1z M876 215h4v14h-4z M882 224h1v15h-1z M880 232h4v1h-4z M886 230h1v16h-1z M884 235h4v8h-4z M901 207h1v31h-1z M899 209h4v22h-4z M916 204h1v23h-1z M914 211h4v10h-4z M919 220h1v24h-1z M917 225h4v19h-4z M927 236h1v3h-1z M927 242h1v11h-1z M934 232h1v11h-1z M932 242h4v1h-4z M953 209h1v17h-1z M951 210h4v16h-4z M968 192h1v6h-1z M966 192h4v6h-4z M975 184h1v14h-1z M973 186h4v12h-4z M987 180h1v12h-1z M985 182h4v5h-4z M998 155h1v17h-1z M996 162h4v1h-4z M1009 140h1v16h-1z M1007 144h4v10h-4z M1013 144h1v20h-1z M1011 153h4v8h-4z M1020 97h1v65h-1z M1018 105h4v57h-4z M1035 125h1v8h-1z M1033 125h4v8h-4z M1047 108h1v17h-1z M1045 108h4v17h-4z M1050 106h1v43h-1z M1048 106h4v26h-4z M1054 135h1v24h-1z M1052 140h4v15h-4z M1061 137h1v16h-1z M1059 145h4v8h-4z M1065 145h1v39h-1z M1063 145h4v39h-4z M1069 183h1v33h-1z M1067 185h4v31h-4z M1076 186h1v15h-1z M1074 187h4v11h-4z M1084 188h1v17h-1z M1082 191h4v14h-4z M1099 178h1v10h-1z M1097 180h4v8h-4z M1103 184h1v27h-1z M1101 187h4v24h-4z M1106 196h1v28h-1z M1104 211h4v1h-4z M1121 187h1v13h-1z M1119 187h4v6h-4z M1129 153h1v19h-1z M1127 157h4v11h-4z M1133 166h1v11h-1z M1131 166h4v9h-4z M1140 149h1v15h-1z M1138 149h4v15h-4z M1144 166h1v22h-1z M1142 171h4v11h-4z M1155 141h1v27h-1z M1153 153h4v7h-4z M1159 157h1v15h-1z M1157 158h4v10h-4z M1162 163h1v8h-1z M1160 163h4v8h-4z M1166 161h1v18h-1z M1164 167h4v10h-4z M1170 170h1v33h-1z M1168 178h4v17h-4z M1192 151h1v11h-1z M1190 155h4v7h-4z M1204 148h1v30h-1z M1202 154h4v24h-4z M1207 163h1v21h-1z M1205 172h4v12h-4z M1211 179h1v18h-1z M1215 184h1v47h-1z M1213 191h4v40h-4z M1219 230h1v23h-1z M1217 243h4v9h-4z M1230 206h1v19h-1z M1228 211h4v9h-4z M1233 219h1v36h-1z M1231 219h4v36h-4z M1241 233h1v11h-1z M1239 233h4v8h-4z M1245 237h1v19h-1z M1243 240h4v12h-4z M1263 213h1v15h-1z M1261 213h4v12h-4z M1282 206h1v6h-1z M1280 206h4v6h-4z M1293 209h1v27h-1z M1291 212h4v10h-4z M1301 209h1v34h-1z M1299 219h4v6h-4z M1308 219h1v10h-1z M1306 223h4v1h-4z M1316 215h1v9h-1z M1314 219h4v1h-4z M1331 201h1v16h-1z M1329 207h4v10h-4z M1334 212h1v21h-1z M1332 218h4v1h-4z M1338 209h1v22h-1z M1336 218h4v1h-4z M1342 212h1v14h-1z M1340 220h4v1h-4z M1346 219h1v17h-1z M1344 219h4v17h-4z M1353 220h1v8h-1z M1351 220h4v8h-4z M1368 207h1v10h-1z M1366 213h4v4h-4z M1372 215h1v5h-1z M1370 215h4v5h-4z M1379 194h1v14h-1z M1377 197h4v11h-4z M1383 205h1v18h-1z M1381 210h4v1h-4z M1391 208h1v17h-1z M1389 217h4v6h-4z M1392 224h4v1h-4z M1405 214h1v6h-1z M1403 214h4v6h-4z M1409 222h1v5h-1z M1407 225h4v1h-4z M1413 221h1v6h-1z M1411 221h4v6h-4z M1417 226h1v24h-1z M1415 226h4v24h-4z M1420 238h1v25h-1z M1418 242h4v21h-4z M1428 242h1v12h-1z M1426 242h4v9h-4z M1432 244h1v13h-1z M1430 252h4v5h-4z M1435 256h1v35h-1z M1433 256h4v35h-4z M1439 282h1v26h-1z M1437 290h4v18h-4z M1443 309h1v31h-1z M1441 312h4v28h-4z M1447 327h1v26h-1z M1447 360h1v15h-1z M1454 345h1v39h-1z M1452 345h4v39h-4z M1477 347h1v23h-1z M1475 347h4v12h-4z M1480 365h1v17h-1z M1478 380h4v1h-4z M1484 376h1v38h-1z M1482 376h4v38h-4z M1488 415h1v14h-1z M1488 444h1v4h-1z M1495 422h1v37h-1z M1493 425h4v34h-4z M1499 460h1v32h-1z M1497 482h4v10h-4z M1503 472h1v30h-1z M1501 489h4v9h-4z M1514 455h1v4h-1z M1514 471h1v4h-1z M1521 436h1v21h-1z M1519 447h4v10h-4z M1525 445h1v28h-1z M1523 456h4v1h-4z M1555 343h1v31h-1z M1553 349h4v25h-4z M1559 365h1v17h-1z M1557 377h4v1h-4z M1563 378h1v24h-1z M1561 389h4v1h-4z M1577 361h1v24h-1z M1575 374h4v11h-4z M1581 376h1v19h-1z M1589 376h1v20h-1z M1587 376h4v20h-4z M1592 408h1v20h-1z M1590 416h4v6h-4z M1596 414h1v41h-1z M1594 424h4v31h-4z M1611 421h1v20h-1z M1609 424h4v9h-4z M1622 405h1v6h-1z M1620 408h4v1h-4z M1626 402h1v35h-1z M1624 410h4v27h-4z M1630 429h1v8h-1z M1630 441h1v13h-1z M1634 424h1v13h-1z M1632 424h4v13h-4z M1637 436h1v3h-1z M1635 436h4v1h-4z"/>
<path fill="#00f" fill-rule="evenodd" d="M1 630h4v14h-4z M2 631v12h2v-12z M5 624h4v4h-4z M6 625v2h2v-2z M39 656h4v11h-4z M40 657v9h2v-9z M42 647h4v7h-4z M43 648v5h2v-5z M54 662h4v8h-4z M55 663v6h2v-6z M57 659h4v5h-4z M58 660v3h2v-3z M72 692h4v14h-4z M73 693v12h2v-12z M80 669h4v13h-4z M81 670v11h2v-11z M99 633h4v21h-4z M100 634v19h2v-19z M110 637h4v8h-4z M111 638v6h2v-6z M114 626h4v12h-4z M115 627v10h2v-10z M121 612h4v12h-4z M122 613v10h2v-10z M140 601h4v23h-4z M141 602v21h2v-21z M151 604h4v5h-4z M152 605v3h2v-3z M155 596h4v7h-4z M156 597v5h2v-5z M158 588h4v19h-4z M159 589v17h2v-17z M166 573h4v17h-4z M167 574v15h2v-15z M173 569h4v9h-4z M174 570v7h2v-7z M188 581h4v5h-4z M189 582v3h2v-3z M192 549h4v24h-4z M193 550v22h2v-22z M207 433h4v13h-4z M208 434v11h2v-11z M211 403h4v38h-4z M212 404v36h2v-36z M214 370h4v23h-4z M215 371v21h2v-21z M218 339h4v8h-4z M219 340v6h2v-6z M226 344h4v4h-4z M227 345v2h2v-2z M233 330h4v28h-4z M234 331v26h2v-26z M241 327h4v8h-4z M242 328v6h2v-6z M244 307h4v21h-4z M245 308v19h2v-19z M259 283h4v31h-4z M260 284v29h2v-29z M278 272h4v23h-4z M279 273v21h2v-21z M282 266h4v7h-4z M283 267v5h2v-5z M293 320h4v11h-4z M294 321v9h2v-9z M297 317h4v4h-4z M298 318v2h2v-2z M300 284h4v34h-4z M301 285v32h2v-32z M323 377h4v45h-4z M324 378v43h2v-43z M327 346h4v32h-4z M328 347v30h2v-30z M330 327h4v17h-4z M331 328v15h2v-15z M342 333h4v25h-4z M343 334v23h2v-23z M345 309h4v25h-4z M346 310v23h2v-23z M349 306h4v5h-4z M350 307v3h2v-3z M353 277h4v34h-4z M354 278v32h2v-32z M357 263h4v15h-4z M358 264v13h2v-13z M360 235h4v28h-4z M361 236v26h2v-26z M372 210h4v43h-4z M373 211v41h2v-41z M375 200h4v11h-4z M376 201v9h2v-9z M383 208h4v6h-4z M384 209v4h2v-4z M398 235h4v7h-4z M399 236v5h2v-5z M401 216h4v18h-4z M402 217v16h2v-16z M420 220h4v12h-4z M421 221v10h2v-10z M424 203h4v18h-4z M425 204v16h2v-16z M428 191h4v13h-4z M429 192v11h2v-11z M457 273h4v23h-4z M458 274v21h2v-21z M461 265h4v9h-4z M462 266v7h2v-7z M472 270h4v11h-4z M473 271v9h2v-9z M476 246h4v24h-4z M477 247v22h2v-22z M484 243h4v6h-4z M485 244v4h2v-4z M517 292h4v26h-4z M518 293v24h2v-24z M529 294h4v11h-4z M530 295v9h2v-9z M540 295h4v11h-4z M541 296v9h2v-9z M543 274h4v21h-4z M544 275v19h2v-19z M558 291h4v13h-4z M559 292v11h2v-11z M562 283h4v9h-4z M563 284v7h2v-7z M570 277h4v15h-4z M571 278v13h2v-13z M573 275h4v4h-4z M574 276v2h2v-2z M585 291h4v13h-4z M586 292v11h2v-11z M588 259h4v32h-4z M589 260v30h2v-30z M596 253h4v13h-4z M597 254v11h2v-11z M600 244h4v14h-4z M601 245v12h2v-12z M603 225h4v19h-4z M604 226v17h2v-17z M607 222h4v5h-4z M608 223v3h2v-3z M611 217h4v6h-4z M612 218v4h2v-4z M618 190h4v33h-4z M619 191v31h2v-31z M622 169h4v16h-4z M623 170v14h2v-14z M633 210h4v5h-4z M634 211v3h2v-3z M641 200h4v17h-4z M642 201v15h2v-15z M648 188h4v9h-4z M649 189v7h2v-7z M659 174h4v27h-4z M660 175v25h2v-25z M663 164h4v12h-4z M664 165v10h2v-10z M671 168h4v10h-4z M672 169v8h2v-8z M678 193h4v7h-4z M679 194v5h2v-5z M682 161h4v35h-4z M683 162v33h2v-33z M730 317h4v41h-4z M731 318v39h2v-39z M734 310h4v4h-4z M735 311v2h2v-2z M742 331h4v13h-4z M743 332v11h2v-11z M749 308h4v26h-4z M750 309v24h2v-24z M757 292h4v22h-4z M758 293v20h2v-20z M772 285h4v15h-4z M773 286v13h2v-13z M783 274h4v12h-4z M784 275v10h2v-10z M787 268h4v7h-4z M788 269v5h2v-5z M790 262h4v7h-4z M791 263v5h2v-5z M794 243h4v20h-4z M795 244v18h2v-18z M805 246h4v16h-4z M806 247v14h2v-14z M809 239h4v11h-4z M810 240v9h2v-9z M813 219h4v11h-4z M814 220v9h2v-9z M820 227h4v4h-4z M821 228v2h2v-2z M824 209h4v19h-4z M825 210v17h2v-17z M839 264h4v18h-4z M840 265v16h2v-16z M846 249h4v26h-4z M847 250v24h2v-24z M854 230h4v14h-4z M855 231v12h2v-12z M858 226h4v10h-4z M859 227v8h2v-8z M861 218h4v4h-4z M862 219v2h2v-2z M873 221h4v15h-4z M874 222v13h2v-13z M887 239h4v11h-4z M888 240v9h2v-9z M891 235h4v5h-4z M892 236v3h2v-3z M895 218h4v11h-4z M896 219v9h2v-9z M902 227h4v14h-4z M903 228v12h2v-12z M906 222h4v6h-4z M907 223v4h2v-4z M910 209h4v8h-4z M911 210v6h2v-6z M921 239h4v15h-4z M922 240v13h2v-13z M936 240h4v4h-4z M937 241v2h2v-2z M940 231h4v9h-4z M941 232v7h2v-7z M944 222h4v7h-4z M945 223v5h2v-5z M947 212h4v8h-4z M948 213v6h2v-6z M959 207h4v15h-4z M960 208v13h2v-13z M962 196h4v9h-4z M963 197v7h2v-7z M970 192h4v6h-4z M971 193v4h2v-4z M977 194h4v4h-4z M978 195v2h2v-2z M981 183h4v7h-4z M982 184v5h2v-5z M988 173h4v8h-4z M989 174v6h2v-6z M992 158h4v14h-4z M993 159v12h2v-12z M1000 149h4v11h-4z M1001 150v9h2v-9z M1003 146h4v4h-4z M1004 147v2h2v-2z M1015 128h4v34h-4z M1016 129v32h2v-32z M1022 144h4v15h-4z M1023 145v13h2v-13z M1030 126h4v11h-4z M1031 127v9h2v-9z M1037 124h4v10h-4z M1038 125v8h2v-8z M1041 112h4v12h-4z M1042 113v10h2v-10z M1056 148h4v8h-4z M1057 149v6h2v-6z M1071 194h4v37h-4z M1072 195v35h2v-35z M1078 196h4v7h-4z M1079 197v5h2v-5z M1086 201h4v20h-4z M1087 202v18h2v-18z M1089 182h4v7h-4z M1090 183v5h2v-5z M1093 178h4v8h-4z M1094 179v6h2v-6z M1116 192h4v12h-4z M1117 193v10h2v-10z M1123 163h4v25h-4z M1124 164v23h2v-23z M1134 159h4v16h-4z M1135 160v14h2v-14z M1145 177h4v5h-4z M1146 178v3h2v-3z M1149 154h4v20h-4z M1150 155v18h2v-18z M1172 185h4v11h-4z M1173 186v9h2v-9z M1175 183h4v3h-4z M1176 184v1h2v-1z M1179 172h4v10h-4z M1180 173v8h2v-8z M1183 161h4v10h-4z M1184 162v8h2v-8z M1187 156h4v5h-4z M1188 157v3h2v-3z M1194 151h4v13h-4z M1195 152v11h2v-11z M1198 148h4v6h-4z M1199 149v4h2v-4z M1220 222h4v14h-4z M1221 223v12h2v-12z M1224 207h4v13h-4z M1225 208v11h2v-11z M1235 238h4v20h-4z M1236 239v18h2v-18z M1246 243h4v11h-4z M1247 244v9h2v-9z M1250 227h4v8h-4z M1251 228v6h2v-6z M1254 222h4v6h-4z M1255 223v4h2v-4z M1258 215h4v16h-4z M1259 216v14h2v-14z M1265 219h4v6h-4z M1266 220v4h2v-4z M1276 206h4v7h-4z M1277 207v5h2v-5z M1288 206h4v8h-4z M1289 207v6h2v-6z M1310 220h4v5h-4z M1311 221v3h2v-3z M1321 203h4v17h-4z M1322 204v15h2v-15z M1347 227h4v8h-4z M1348 228v6h2v-6z M1362 216h4v4h-4z M1363 217v2h2v-2z M1374 201h4v18h-4z M1375 202v16h2v-16z M1396 221h4v8h-4z M1397 222v6h2v-6z M1400 219h4v3h-4z M1401 220v1h2v-1z M1422 246h4v15h-4z M1423 247v13h2v-13z M1456 378h4v15h-4z M1457 379v13h2v-13z M1460 368h4v14h-4z M1461 369v12h2v-12z M1467 356h4v20h-4z M1468 357v18h2v-18z M1471 357h4v5h-4z M1472 358v3h2v-3z M1504 465h4v28h-4z M1505 466v26h2v-26z M1508 456h4v5h-4z M1509 457v3h2v-3z M1516 452h4v13h-4z M1517 453v11h2v-11z M1527 438h4v19h-4z M1528 439v17h2v-17z M1534 421h4v5h-4z M1535 422v3h2v-3z M1538 410h4v12h-4z M1539 411v10h2v-10z M1542 395h4v17h-4z M1543 396v15h2v-15z M1546 375h4v19h-4z M1547 376v17h2v-17z M1549 355h4v21h-4z M1550 356v19h2v-19z M1564 359h4v27h-4z M1565 360v25h2v-25z M1572 353h4v14h-4z M1573 354v12h2v-12z M1598 453h4v6h-4z M1599 454v4h2v-4z M1602 442h4v8h-4z M1603 443v6h2v-6z M1605 429h4v14h-4z M1606 430v12h2v-12z M1613 411h4v20h-4z M1614 412v18h2v-18z M1617 407h4v6h-4z M1618 408v4h2v-4z"/>
<path fill="#f00" fill-rule="evenodd" d="M256 313h4v5h-4z M257 314v3h2v-3z M267 284h4v16h-4z M268 285v14h2v-14z M315 355h4v34h-4z M316 356v32h2v-32z M615 222h4v11h-4z M616 223v9h2v-9z M764 297h4v3h-4z M765 298v1h2v-1z M768 294h4v4h-4z M769 295v2h2v-2z M925 239h4v3h-4z M926 240v1h2v-1z M1209 197h4v11h-4z M1210 198v9h2v-9z M1284 211h4v8h-4z M1285 212v6h2v-6z M1445 353h4v7h-4z M1446 354v5h2v-5z M1486 429h4v15h-4z M1487 430v13h2v-13z M1512 459h4v12h-4z M1513 460v10h2v-10z M1579 395h4v20h-4z M1580 396v18h2v-18z M1628 437h4v4h-4z M1629 438v2h2v-2z"/>
<polyline fill="none" stroke="#000" stroke-width="2" stroke-linejoin="round" points="0.0,678.0 1.9,677.0 14.0,663.8 30.0,654.0 45.0,652.2 65.7,651.3 71.3,652.6 82.5,660.0 93.8,664.2 101.3,664.4 112.6,661.0 127.6,654.4 142.6,644.1 150.0,635.7 160.8,624.4 172.6,610.4 180.0,602.9 187.6,598.2 197.0,587.8 202.6,579.4 208.3,564.4 210.0,560.0 218.4,528.1 230.6,481.3 245.6,428.8 251.9,410.0 260.3,380.0 265.0,361.3 272.5,342.5 281.9,320.0 288.4,311.0 296.9,308.8 308.1,300.9 316.6,302.8 325.0,310.6 334.4,313.4 345.6,321.9 359.7,322.4 370.0,310.6 386.9,286.3 398.1,265.6 405.0,255.6 418.1,235.9 434.1,219.1 445.3,219.1 453.8,227.5 462.2,235.0 470.6,236.9 481.9,241.6 497.8,249.1 505.3,260.3 515.6,270.6 524.1,275.9 531.6,276.3 540.9,280.9 547.5,281.9 556.9,288.4 564.4,292.8 573.8,292.8 580.0,291.8 586.9,290.9 600.9,283.4 618.8,263.8 633.8,243.1 648.8,228.1 660.0,212.2 675.0,197.2 684.4,192.5 692.8,186.9 701.3,189.1 714.4,195.3 721.9,203.8 733.1,222.5 746.3,252.5 756.3,266.9 763.1,282.5 771.2,294.7 778.0,302.1 784.8,304.8 791.5,304.8 805.0,292.0 817.2,275.7 826.9,261.6 836.3,257.8 845.6,255.4 855.0,249.4 864.4,243.2 875.6,241.5 881.3,239.1 892.5,240.0 904.7,240.9 911.3,235.3 918.8,231.6 926.3,230.1 935.6,231.9 945.0,231.9 960.0,229.7 967.5,225.0 976.9,220.9 988.1,215.6 999.4,203.8 1008.8,191.6 1020.0,179.4 1029.4,170.9 1040.6,157.8 1051.9,147.1 1064.1,142.8 1070.6,147.1 1083.8,155.0 1097.8,161.6 1110.0,173.8 1121.3,186.5 1132.5,190.1 1140.0,189.7 1149.4,185.9 1159.7,180.3 1170.0,179.8 1177.5,179.4 1186.9,173.8 1196.3,169.6 1203.8,167.8 1208.4,169.1 1218.8,177.2 1229.1,184.7 1239.4,194.1 1252.5,203.4 1261.9,209.6 1271.3,218.4 1277.8,224.4 1284.4,225.9 1290.0,225.6 1293.8,223.1 1305.0,223.5 1312.5,222.8 1321.9,219.4 1329.4,216.6 1340.6,216.6 1350.0,217.5 1357.5,219.8 1368.8,220.3 1376.3,219.9 1385.6,217.1 1395.0,217.5 1402.5,218.8 1413.1,218.8 1420.6,222.5 1428.1,224.4 1435.6,228.5 1443.1,238.4 1450.6,249.7 1456.3,262.8 1465.6,282.5 1475.0,299.4 1482.5,318.1 1491.9,338.8 1497.5,355.6 1503.8,371.3 1512.2,399.4 1524.4,417.2 1535.6,426.6 1545.0,431.8 1554.4,431.8 1563.8,427.5 1571.3,418.1 1578.8,405.9 1586.3,399.4 1593.8,395.3 1606.9,395.3 1619.1,396.0 1625.6,401.3 1631.3,405.9 1637.3,411.0"/>
<rect x="1681" y="28" width="1" height="908" fill="#000"/>
<rect x="2" y="935" width="1680" height="1" fill="#000"/>
<path fill="#000" d="M1681 716h9v1h-9z M1681 672h4v1h-4z M1681 631h4v1h-4z M1681 594h4v1h-4z M1681 559h4v1h-4z M1681 527h9v1h-9z M1681 497h4v1h-4z M1681 468h4v1h-4z M1681 442h4v1h-4z M1681 416h4v1h-4z M1681 392h9v1h-9z M1681 370h4v1h-4z M1681 348h4v1h-4z M1681 327h4v1h-4z M1681 307h4v1h-4z M1681 288h9v1h-9z M1681 270h4v1h-4z M1681 252h4v1h-4z M1681 235h4v1h-4z M1681 219h4v1h-4z M1681 203h9v1h-9z M1681 188h4v1h-4z M1681 173h4v1h-4z M1681 158h4v1h-4z M1681 144h4v1h-4z M1681 131h9v1h-9z M1681 118h4v1h-4z M1681 105h4v1h-4z M1681 92h4v1h-4z M1681 80h4v1h-4z M1681 68h9v1h-9z M1681 57h4v1h-4z M1681 46h4v1h-4z M1681 35h4v1h-4z M1681 921h9v1h-9z M1681 914h4v1h-4z M1681 906h4v1h-4z M1681 899h4v1h-4z M1681 891h4v1h-4z M1681 884h9v1h-9z M1681 876h4v1h-4z M1681 869h4v1h-4z M1681 861h4v1h-4z M1681 854h4v1h-4z M1681 846h9v1h-9z M1681 839h4v1h-4z M1681 831h4v1h-4z M1681 824h4v1h-4z M1681 816h4v1h-4z M1681 809h9v1h-9z M1681 801h4v1h-4z M1681 794h4v1h-4z M1681 786h4v1h-4z M1681 779h4v1h-4z M1681 771h9v1h-9z M82 935h1v20h-1z M160 935h1v20h-1z M246 935h1v20h-1z M321 935h1v20h-1z M377 935h1v20h-1z M463 935h1v20h-1z M538 935h1v20h-1z M613 935h1v20h-1z M695 935h1v20h-1z M777 935h1v20h-1z M860 935h1v20h-1z M934 935h1v20h-1z M1013 935h1v20h-1z M1095 935h1v20h-1z M1181 935h1v20h-1z M1252 935h1v20h-1z M1312 935h1v20h-1z M1398 935h1v20h-1z M1473 935h1v20h-1z M1548 935h1v20h-1z M1630 935h1v20h-1z M7 935h1v5h-1z M26 935h1v5h-1z M44 935h1v5h-1z M63 935h1v5h-1z M101 935h1v5h-1z M119 935h1v5h-1z M138 935h1v5h-1z M157 935h1v5h-1z M175 935h1v5h-1z M194 935h1v5h-1z M213 935h1v5h-1z M231 935h1v5h-1z M265 935h1v5h-1z M284 935h1v5h-1z M302 935h1v5h-1z M340 935h1v5h-1z M359 935h1v5h-1z M396 935h1v5h-1z M415 935h1v5h-1z M433 935h1v5h-1z M452 935h1v5h-1z M471 935h1v5h-1z M489 935h1v5h-1z M508 935h1v5h-1z M523 935h1v5h-1z M553 935h1v5h-1z M572 935h1v5h-1z M590 935h1v5h-1z M609 935h1v5h-1z M628 935h1v5h-1z M646 935h1v5h-1z M665 935h1v5h-1z M684 935h1v5h-1z M703 935h1v5h-1z M721 935h1v5h-1z M740 935h1v5h-1z M759 935h1v5h-1z M796 935h1v5h-1z M815 935h1v5h-1z M833 935h1v5h-1z M852 935h1v5h-1z M863 935h1v5h-1z M882 935h1v5h-1z M901 935h1v5h-1z M919 935h1v5h-1z M938 935h1v5h-1z M957 935h1v5h-1z M975 935h1v5h-1z M994 935h1v5h-1z M1032 935h1v5h-1z M1050 935h1v5h-1z M1069 935h1v5h-1z M1088 935h1v5h-1z M1106 935h1v5h-1z M1125 935h1v5h-1z M1144 935h1v5h-1z M1162 935h1v5h-1z M1196 935h1v5h-1z M1215 935h1v5h-1z M1233 935h1v5h-1z M1271 935h1v5h-1z M1290 935h1v5h-1z M1308 935h1v5h-1z M1327 935h1v5h-1z M1346 935h1v5h-1z M1364 935h1v5h-1z M1383 935h1v5h-1z M1402 935h1v5h-1z M1435 935h1v5h-1z M1454 935h1v5h-1z M1484 935h1v5h-1z M1503 935h1v5h-1z M1521 935h1v5h-1z M1540 935h1v5h-1z M1559 935h1v5h-1z M1577 935h1v5h-1z M1596 935h1v5h-1z M1615 935h1v5h-1z M1634 935h1v5h-1z M1652 935h1v5h-1z M1671 935h1v5h-1z"/>
<path fill="#000" d="M1683 922h29v13h-1v-12h-27v12h-1z"/>
<rect x="1686" y="427" width="41" height="16" fill="#000"/>
<g font-family="'Liberation Sans', Arial, sans-serif" font-size="12" fill="#000" shape-rendering="auto">
<text x="1728" y="74" text-anchor="end">40</text>
<text x="1728" y="137" text-anchor="end">35</text>
<text x="1728" y="209" text-anchor="end">30</text>
<text x="1728" y="294" text-anchor="end">25</text>
<text x="1728" y="398" text-anchor="end">20</text>
<text x="1728" y="533" text-anchor="end">15</text>
<text x="1728" y="722" text-anchor="end">10</text>
<text x="1728" y="815" text-anchor="end">15000</text>
<text x="1728" y="852" text-anchor="end">10000</text>
<text x="1728" y="890" text-anchor="end">5000</text>
<text x="1728" y="927" text-anchor="end">0</text>
<text x="2" y="952">October</text>
<text x="84" y="952">November</text>
<text x="162" y="952">December</text>
<text x="248" y="952">2021</text>
<text x="323" y="952">February</text>
<text x="379" y="952">March</text>
<text x="465" y="952">April</text>
<text x="540" y="952">May</text>
<text x="615" y="952">June</text>
<text x="697" y="952">July</text>
<text x="779" y="952">August</text>
<text x="862" y="952">September</text>
<text x="936" y="952">October</text>
<text x="1015" y="952">November</text>
<text x="1097" y="952">December</text>
<text x="1183" y="952">2022</text>
<text x="1254" y="952">February</text>
<text x="1314" y="952">March</text>
<text x="1400" y="952">April</text>
<text x="1475" y="952">May</text>
<text x="1550" y="952">June</text>
<text x="1632" y="952">July</text>
<text x="1687.5" y="439" font-size="11" fill="#fff" textLength="38" lengthAdjust="spacingAndGlyphs">18.2000</text>
<text x="1685" y="932" font-size="9" textLength="24.5" lengthAdjust="spacingAndGlyphs">x1000</text>
</g>
</svg>
</body></html>
